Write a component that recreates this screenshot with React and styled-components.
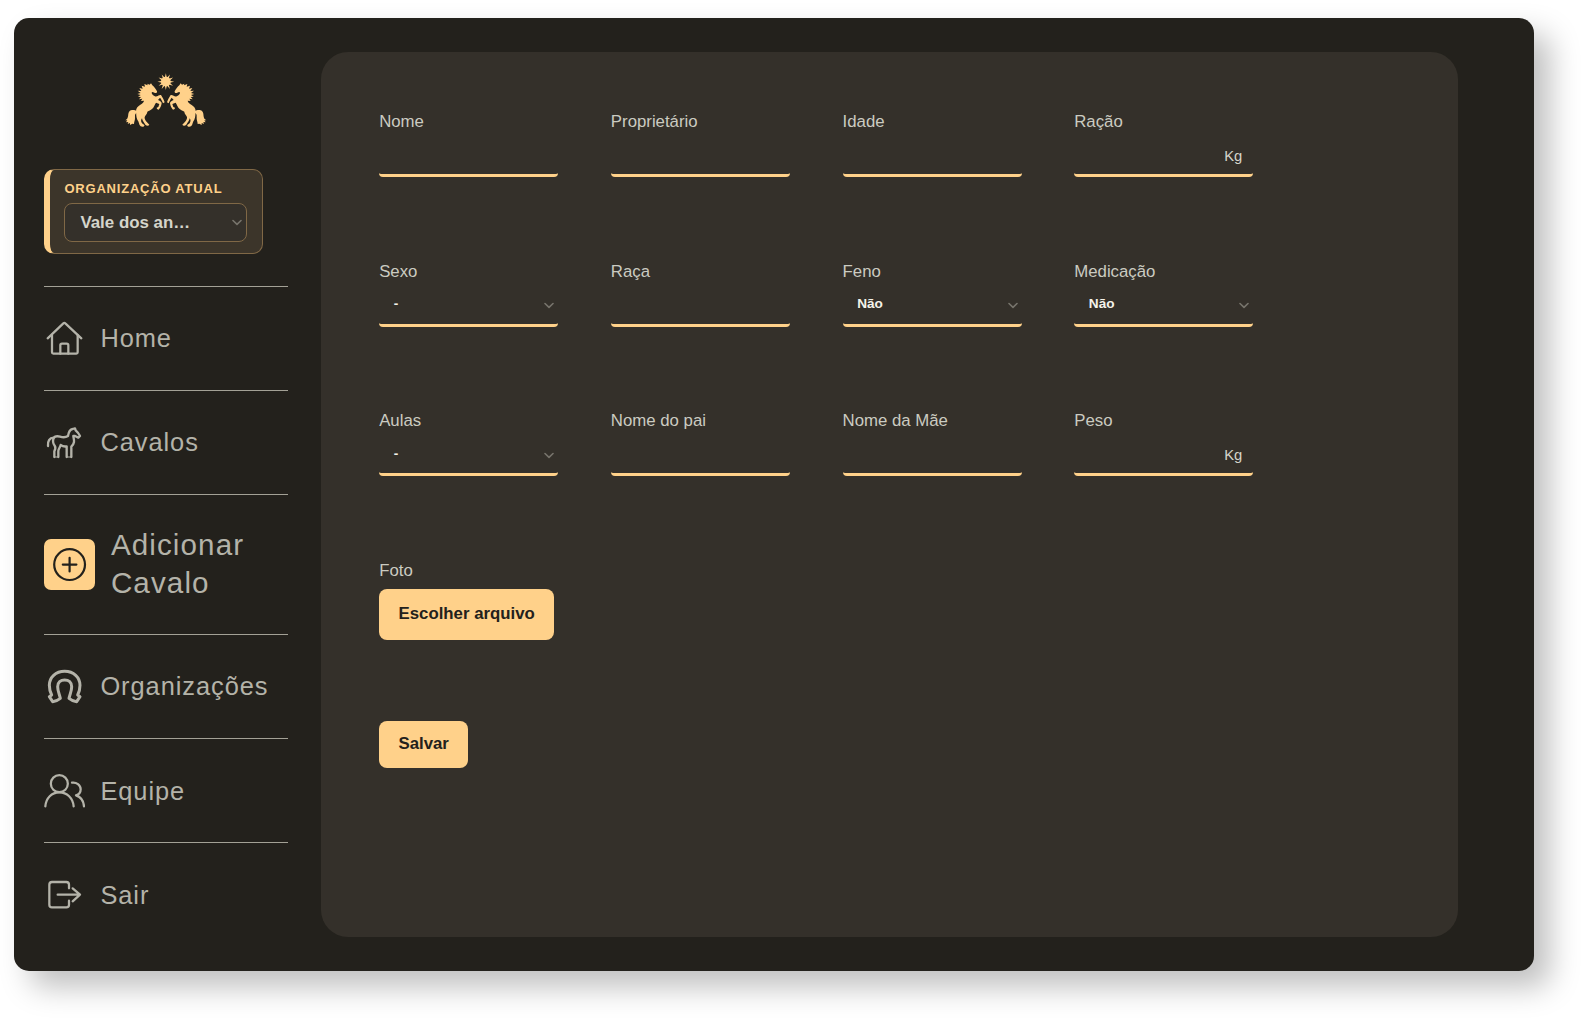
import React from 'react';
import styled, {createGlobalStyle} from 'styled-components';

const GlobalStyle = createGlobalStyle`
  * {
    box-sizing: border-box;
  }

  body {
    margin: 0;
    background: #fff;
    font-family: 'Liberation Sans', Arial, sans-serif;
    overflow: hidden;
  }
`;

const Page = styled.div`
  width: 1586px;
  height: 1020px;
  padding: 18px 0 0 14px;
`;

const Window = styled.div`
  display: flex;
  width: 1519.7px;
  height: 952.7px;
  padding: 34px 76px 34px 30.4px;
  border-radius: 15px;
  background: #23211c;
  box-shadow: 16px 16px 30px rgba(0, 0, 0, 0.25);
`;

const Sidebar = styled.aside`
  flex: none;
  width: 243.6px;
  margin-right: 33.2px;
`;

const LogoBox = styled.div`
  display: flex;
  padding: 21px 0 0 80.6px;
  height: 116.5px;
`;

const OrgCard = styled.div`
  display: flex;
  flex-direction: column;
  width: 218.2px;
  height: 85px;
  padding: 11px 15px 10px 14px;
  border: 1px solid #806846;
  border-left: 6px solid #ffd18a;
  border-radius: 10px;
  background: #3c352a;
`;

const OrgLabel = styled.span`
  font-size: 13px;
  font-weight: 700;
  line-height: 15px;
  letter-spacing: 0.8px;
  color: #ffd18a;
  white-space: nowrap;
`;

const OrgSelect = styled.div`
  display: flex;
  align-items: center;
  justify-content: space-between;
  height: 39px;
  margin-top: 7.6px;
  padding: 0 4px 0 15px;
  border: 1px solid #806846;
  border-radius: 8px;
  background: #34302a;
  font-size: 16.9px;
  font-weight: 700;
  color: #d5d5cb;
`;

const Menu = styled.nav`
  margin-top: 32px;
`;

const MenuItem = styled.a`
  display: flex;
  align-items: center;
  gap: ${({$active}) => ($active ? 15.5 : 15)}px;
  height: ${({$active}) => ($active ? 140 : 104.2)}px;
  border-top: 1px solid #a3a196;
  font-size: ${({$active}) => ($active ? 29.6 : 25.4)}px;
  line-height: ${({$active}) => ($active ? 38 : 30)}px;
  letter-spacing: ${({$active}) => ($active ? 1.1 : 0.95)}px;
  color: #b4b3a9;
`;

const ActiveIcon = styled.span`
  display: flex;
  flex: none;
  width: 51px;
  height: 51px;
  border-radius: 7px;
  background: #ffd18a;
`;

const Panel = styled.main`
  flex: 1;
  height: 885px;
  padding: 60px 58px;
  border-radius: 27px;
  background: #34302a;
`;

const Form = styled.form`
  display: grid;
  grid-template-columns: repeat(4, 179px);
  grid-auto-rows: 149.6px;
  column-gap: 52.7px;
`;

const Field = styled.label`
  display: flex;
  flex-direction: column;
`;

const FieldLabel = styled.span`
  font-size: 16.8px;
  line-height: 20px;
  color: #cbcbc1;
`;

const Control = styled.span`
  display: flex;
  align-items: center;
  justify-content: space-between;
  height: 40px;
  margin-top: 5px;
  padding: ${({$select}) => ($select ? '0 4px 3px 14.6px' : '3px 11px 3px 10px')};
  border-bottom: 3px solid #ffd18a;
  border-radius: 4px;
  font-size: ${({$select}) => ($select ? 13.6 : 14.8)}px;
  font-weight: ${({$select}) => ($select ? 700 : 400)};
  color: ${({$select}) => ($select ? '#f4f3ea' : '#d5d5cb')};
`;

const Input = styled.input`
  flex: 1;
  min-width: 0;
  padding: 0;
  border: 0;
  outline: 0;
  background: transparent;
  color: inherit;
  font: inherit;
`;

const Button = styled.button`
  display: flex;
  align-items: center;
  justify-content: center;
  width: ${({$wide}) => ($wide ? 175 : 89)}px;
  height: ${({$wide}) => ($wide ? 51 : 47)}px;
  margin-top: ${({$wide}) => ($wide ? 8 : 0)}px;
  padding: 0 0 1px;
  border: 0;
  border-radius: 8px;
  background: #ffd18a;
  font-family: inherit;
  font-size: 16.8px;
  font-weight: 700;
  color: #23211c;
  white-space: nowrap;
`;

const SaveRow = styled.div`
  margin-top: 11px;
`;

const IconSvg = styled.svg`
  flex: none;
  width: 41px;
  height: 41px;
  fill: none;
  stroke: #b4b3a9;
  stroke-width: ${({$weight}) => $weight || 6.8};
  stroke-linecap: round;
  stroke-linejoin: round;
`;

const ChevronSvg = styled.svg`
  flex: none;
  width: 10px;
  height: 7px;
  margin-top: ${({$drop}) => $drop || 0}px;
  fill: none;
  stroke: #77746c;
  stroke-width: 1.6;
  stroke-linecap: round;
  stroke-linejoin: round;
`;

const Chevron = ({drop}) => (
    <ChevronSvg viewBox="0 0 10 7" $drop={drop}>
        <path d="M1 1.5 L5 5.3 L9 1.5" />
    </ChevronSvg>
);

const HomeIcon = () => (
    <IconSvg viewBox="0 0 123 123">
        <path d="M11 61 L58 16 Q61 13 64 16 L112 61" />
        <path d="M24 51 V103 Q24 107 28 107 H97 Q101 107 101 103 V51" />
        <path d="M49 107 V82 Q49 77 54 77 H68 Q73 77 73 82 V107" />
    </IconSvg>
);

const HorseIcon = () => (
    <IconSvg viewBox="0 0 123 123" $weight={7}>
        <path d="M12 72 C11 58 16 48 29 47" />
        <path d="M31 105 V88 C35 80 36 76 32 71 C27 65 26 56 29 48 C33 42 40 42 48 44 C58 47 66 46 72 42 C74 29 78 22 86 21 L93 19 L95 25 C101 30 105 36 108 42 L103 47 L93 42 L88 42 C88 48 91 52 90 60 C89 67 86 70 82 74 V105" />
        <path d="M43 105 V87 C43 81 48 77 50 69 C57 74 62 74 68 73 V105" />
        <path d="M31 105 H43 M68 105 H82" strokeWidth="3" />
    </IconSvg>
);

const HorseshoeIcon = () => (
    <IconSvg viewBox="0 0 123 123" $weight={9}>
        <path d="M62 16 C35 16 16 34 16 58 C16 69 19 79 23 87 L16 92 L26 107 C35 106 43 102 49 97 C46 84 41 75 41 62 C41 49 50 42 62 42 C74 42 83 49 83 62 C83 75 78 84 75 97 C81 102 89 106 98 107 L108 92 L101 87 C105 79 108 69 108 58 C108 34 89 16 62 16 Z" />
    </IconSvg>
);

const TeamIcon = () => (
    <IconSvg viewBox="0 0 123 123">
        <circle cx="46" cy="41" r="25.5" />
        <path d="M4 109 C6 84 23 67 46 67 C69 67 87 84 89 109" />
        <path d="M84 38 C97 36 110 45 110 58 C110 67 104 74 96 76 C111 81 119 94 120 109" />
    </IconSvg>
);

const ExitIcon = () => (
    <IconSvg viewBox="0 0 123 123">
        <path d="M75 43 V32 Q75 24 67 24 H24 Q16 24 16 32 V92 Q16 100 24 100 H67 Q75 100 75 92 V80" />
        <path d="M41 62 H108 M86 43 L108 62 L86 82" />
    </IconSvg>
);

const PlusIcon = () => (
    <svg width="51" height="51" fill="none" stroke="#23211c" strokeWidth="2.2" strokeLinecap="round">
        <circle cx="25.6" cy="25.6" r="15.4" />
        <path d="M25.6 18.8 V32.4 M18.8 25.6 H32.4" />
    </svg>
);

const SUN_RAYS = 12;
const sunPoints = Array.from({length: SUN_RAYS * 2}, (_, i) => {
    const radius = i % 2 ? 12 : 25;
    const angle = (i * Math.PI) / SUN_RAYS - Math.PI / 2;
    return `${167.5 + radius * Math.cos(angle)},${64 + radius * Math.sin(angle)}`;
}).join(' ');

const RearingHorse = () => (
    <g>
        <path d="M123 69 L127 75 C133 80 137 86 141 93 C142 97 139 99 135 98 L128 95 C124 95 124 99 128 103 C132 107 137 109 141 108 C144 106 148 103 153 104 C157 110 162 119 164 126 L159 129 C157 123 153 115 150 112 L144 119 C149 121 154 124 155 128 C154 136 151 143 146 148 L141 146 L140 142 L145 140 L148 131 L138 127 C134 133 132 141 126 146 C122 150 117 151 112 154 C112 160 106 164 104 170 C103 175 106 180 111 186 L118 193 C116 197 110 197 106 193 C102 186 97 181 96 174 C93 178 92 183 96 189 L103 194 C105 199 97 201 92 198 C86 193 88 185 82 178 C78 170 79 161 78 153 C78 144 83 138 90 134 C97 130 101 126 102 121 L93 122 L97 115 L87 117 L93 110 L84 109 L92 104 L82 101 L92 98 L83 91 L94 92 L88 83 L98 85 L95 76 L105 79 L103 71 L113 75 L112 70 L119 73 Z" />
        <path d="M81 153 C75 148 64 147 59 152 C52 159 57 170 50 177 L46 180 L52 180 L48 186 L55 185 L53 191 L60 188 L60 194 L67 190 L72 191 C72 183 76 180 75 170 C74 161 78 158 80 158 Z" />
    </g>
);

const Logo = () => (
    <svg width="82" height="55" viewBox="45 38 246 165" fill="#ffd18a">
        <polygon points={sunPoints} />
        <circle cx="167.5" cy="64" r="14.5" />
        <RearingHorse />
        <g transform="translate(335 0) scale(-1 1)">
            <RearingHorse />
        </g>
    </svg>
);

const menu = [
    {label: 'Home', icon: <HomeIcon />},
    {label: 'Cavalos', icon: <HorseIcon />},
    {label: 'Adicionar Cavalo', icon: <ActiveIcon><PlusIcon /></ActiveIcon>, active: true},
    {label: 'Organizações', icon: <HorseshoeIcon />},
    {label: 'Equipe', icon: <TeamIcon />},
    {label: 'Sair', icon: <ExitIcon />},
];

const fields = [
    {label: 'Nome'},
    {label: 'Proprietário'},
    {label: 'Idade'},
    {label: 'Ração', unit: 'Kg'},
    {label: 'Sexo', value: '-'},
    {label: 'Raça'},
    {label: 'Feno', value: 'Não'},
    {label: 'Medicação', value: 'Não'},
    {label: 'Aulas', value: '-'},
    {label: 'Nome do pai'},
    {label: 'Nome da Mãe'},
    {label: 'Peso', unit: 'Kg'},
];

const App = () => (
    <Page>
        <GlobalStyle />
        <Window>
            <Sidebar>
                <LogoBox><Logo /></LogoBox>
                <OrgCard>
                    <OrgLabel>ORGANIZAÇÃO ATUAL</OrgLabel>
                    <OrgSelect>
                        <span>Vale dos an…</span>
                        <Chevron />
                    </OrgSelect>
                </OrgCard>
                <Menu>
                    {menu.map(({label, icon, active}) =>
                        <MenuItem key={label} $active={active}>
                            {icon}
                            <span>{label}</span>
                        </MenuItem>
                    )}
                </Menu>
            </Sidebar>
            <Panel>
                <Form>
                    {fields.map(({label, value, unit}) =>
                        <Field key={label}>
                            <FieldLabel>{label}</FieldLabel>
                            <Control $select={Boolean(value)}>
                                {value ? <span>{value}</span> : <Input />}
                                {value && <Chevron drop={4} />}
                                {unit && <span>{unit}</span>}
                            </Control>
                        </Field>
                    )}
                    <Field as="div">
                        <FieldLabel>Foto</FieldLabel>
                        <Button type="button" $wide>Escolher arquivo</Button>
                    </Field>
                </Form>
                <SaveRow>
                    <Button type="button">Salvar</Button>
                </SaveRow>
            </Panel>
        </Window>
    </Page>
);

export default App;
